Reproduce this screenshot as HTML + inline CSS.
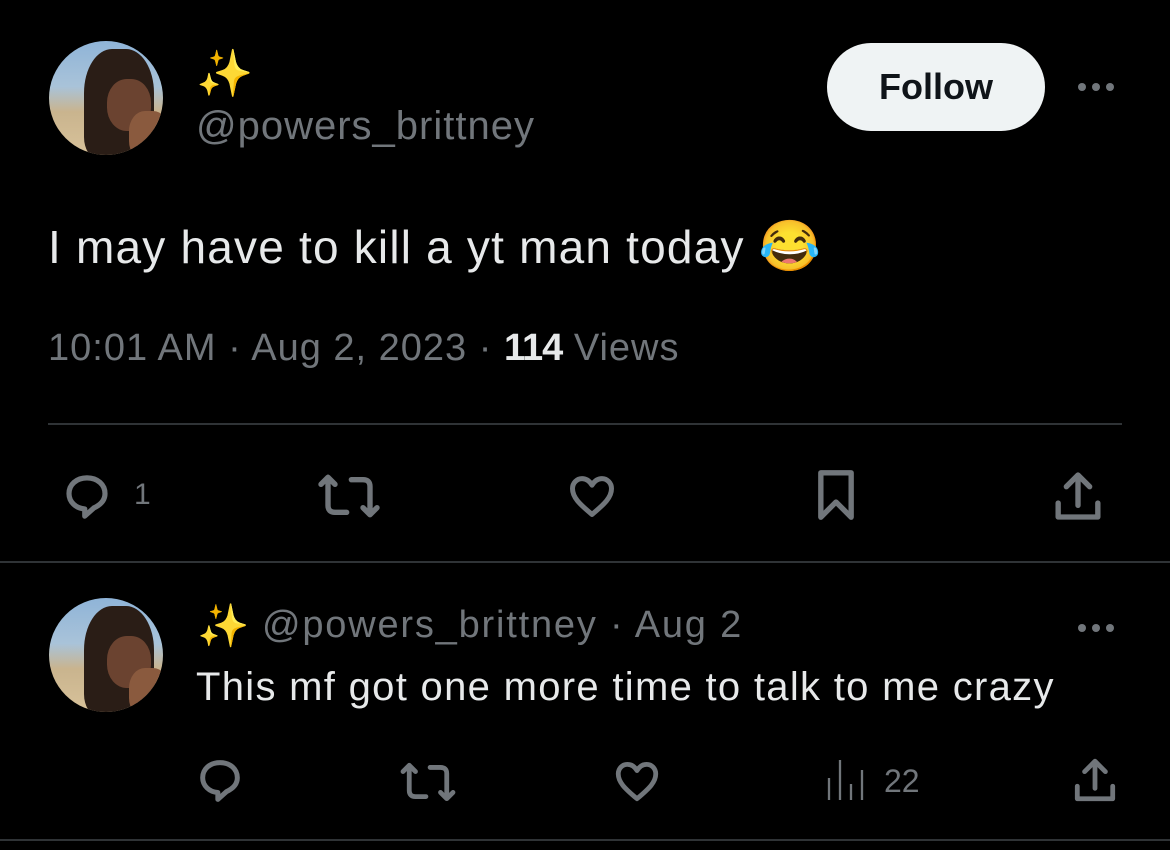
<!DOCTYPE html>
<html><head><meta charset="utf-8"><style>
*{margin:0;padding:0;box-sizing:border-box}
body{width:1170px;height:850px;background:#000;position:relative;overflow:hidden;font-family:"Liberation Sans",sans-serif;color:#e7e9ea}
.a{position:absolute;white-space:nowrap}
.av{position:absolute;width:114px;height:114px;border-radius:50%;overflow:hidden;background:linear-gradient(180deg,#8fb4d8 0%,#a9c3d9 40%,#c9b48e 62%,#d8c29a 100%)}
.av .h{position:absolute;left:35px;top:8px;width:70px;height:110px;border-radius:40% 40% 20% 20%;background:#2a1d16}
.av .f{position:absolute;left:58px;top:38px;width:44px;height:52px;border-radius:45%;background:#6b4330}
.av .s{position:absolute;left:80px;top:70px;width:40px;height:50px;border-radius:40%;background:#8a5a3e}
.g{color:#71767b}
svg{position:absolute;fill:none;stroke:#71767b;stroke-width:2.3;stroke-linejoin:round;stroke-linecap:round}
.dots{position:absolute;display:flex;gap:6px}
.dots i{width:8px;height:8px;border-radius:50%;background:#71767b;display:block}
.e{font-family:'Noto Sans CJK SC',sans-serif;letter-spacing:0}
</style></head><body>
<div class="av" style="left:49px;top:41px"><div class="h"></div><div class="f"></div><div class="s"></div></div>
<div class="a e" style="left:196px;top:42px;font-size:46px;line-height:56px;color:#f4b12e">✨</div>
<div class="a g" style="left:196px;top:103px;font-size:40px;line-height:46px;letter-spacing:1px">@powers_brittney</div>
<div class="a" style="left:827px;top:43px;width:218px;height:88px;border-radius:44px;background:#eff3f4;color:#0f1419;font-weight:bold;font-size:36px;line-height:88px;text-align:center">Follow</div>
<div class="dots" style="left:1078px;top:83px"><i></i><i></i><i></i></div>
<div class="a" style="left:48px;top:214px;font-size:46px;line-height:56px;letter-spacing:1.2px">I may have to kill a yt man today <span class="e" style="font-size:50px">😂</span></div>
<div class="a g" style="left:48px;top:325px;font-size:38px;line-height:46px;letter-spacing:1px">10:01 AM · Aug 2, 2023 · <b style="color:#e7e9ea;letter-spacing:-1px">114</b> Views</div>
<div class="a" style="left:48px;top:423px;width:1074px;height:2px;background:#2f3336"></div>
<svg style="left:60px;top:470px" width="54" height="54" viewBox="0 0 24 24"><path d="M12 3.5c-4.7 0-8 3-8 7 0 3.6 3 6.6 7 6.8v3.2l4-3.6c3-1.4 5-3.6 5-6.4 0-4-3.3-7-8-7z"/></svg>
<div class="a g" style="left:134px;top:477px;font-size:30px;line-height:36px">1</div>
<svg style="left:316px;top:468px" width="66" height="56" viewBox="0 0 28 24"><path d="M5 4v12q0 3 3 3h5M2 7l3-3 3 3M23 20V8q0-3-3-3h-5M20 17l3 3 3-3"/></svg>
<svg style="left:565px;top:470px" width="54" height="52" viewBox="0 0 24 24"><path d="M12 20.5C6 15.5 3 12.5 3 8.6 3 6 5 4 7.4 4 9.5 4 11 5.3 12 7c1-1.7 2.5-3 4.6-3C19 4 21 6 21 8.6c0 3.9-3 6.9-9 11.9z"/></svg>
<svg style="left:808px;top:466px" width="56" height="58" viewBox="0 0 24 24"><path d="M5.5 2.5h13v19L12 15l-6.5 6.5z"/></svg>
<svg style="left:1050px;top:468px" width="56" height="56" viewBox="0 0 24 24"><path d="M12 3v13M7 8l5-5 5 5M3.5 15v6h17v-6"/></svg>
<div class="a" style="left:0;top:561px;width:1170px;height:2px;background:#2f3336"></div>
<div class="av" style="left:49px;top:598px"><div class="h"></div><div class="f"></div><div class="s"></div></div>
<div class="a e" style="left:197px;top:597px;font-size:42px;line-height:52px;color:#f4b12e">✨</div>
<div class="a g" style="left:262px;top:602px;font-size:38px;line-height:46px;letter-spacing:1.8px">@powers_brittney · Aug 2</div>
<div class="dots" style="left:1078px;top:624px"><i></i><i></i><i></i></div>
<div class="a" style="left:196px;top:663px;font-size:40px;line-height:48px;letter-spacing:1.3px">This mf got one more time to talk to me crazy</div>
<svg style="left:194px;top:755px" width="52" height="52" viewBox="0 0 24 24"><path d="M12 3.5c-4.7 0-8 3-8 7 0 3.6 3 6.6 7 6.8v3.2l4-3.6c3-1.4 5-3.6 5-6.4 0-4-3.3-7-8-7z"/></svg>
<svg style="left:398px;top:757px" width="60" height="50" viewBox="0 0 28 24"><path d="M5 4v12q0 3 3 3h5M2 7l3-3 3 3M23 20V8q0-3-3-3h-5M20 17l3 3 3-3"/></svg>
<svg style="left:611px;top:756px" width="52" height="50" viewBox="0 0 24 24"><path d="M12 20.5C6 15.5 3 12.5 3 8.6 3 6 5 4 7.4 4 9.5 4 11 5.3 12 7c1-1.7 2.5-3 4.6-3C19 4 21 6 21 8.6c0 3.9-3 6.9-9 11.9z"/></svg>
<svg style="left:826px;top:756px;stroke-linecap:butt" width="40" height="46" viewBox="0 0 40 46"><path d="M3 22v22M14 4v40M25 28v16M36 14v30"/></svg>
<div class="a g" style="left:884px;top:762px;font-size:32px;line-height:38px">22</div>
<svg style="left:1070px;top:754px" width="50" height="52" viewBox="0 0 24 24"><path d="M12 3v13M7 8l5-5 5 5M3.5 15v6h17v-6"/></svg>
<div class="a" style="left:0;top:839px;width:1170px;height:2px;background:#2f3336"></div>
</body></html>
